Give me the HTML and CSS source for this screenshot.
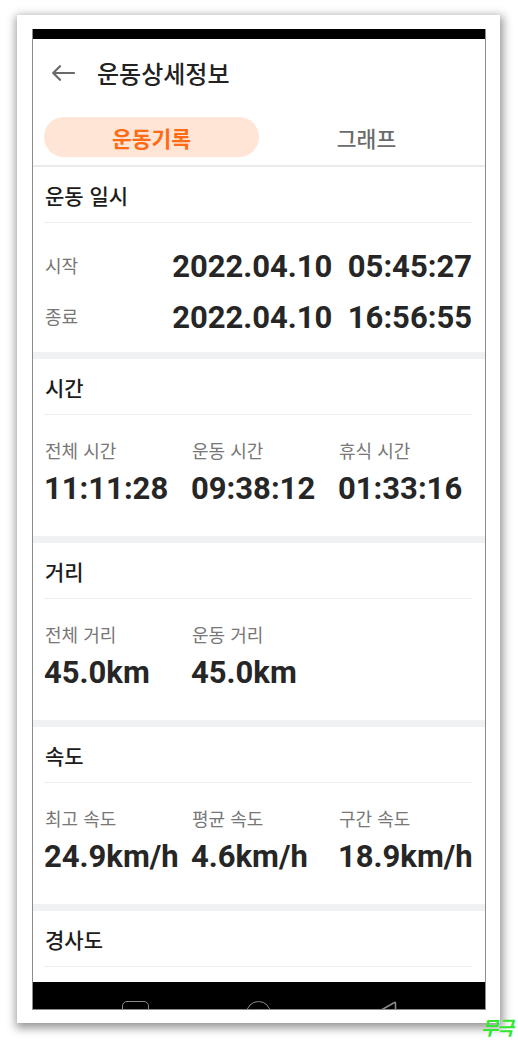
FILE: index.html
```html
<!DOCTYPE html>
<html lang="ko">
<head>
<meta charset="utf-8">
<title>운동상세정보</title>
<link rel="stylesheet" href="styles.css">
</head>
<body>
<div class="page">
  <div class="frame">
    <div class="screen">
      <div class="statusbar"></div>
      <div class="content">
        <header class="appbar">
          <svg class="back" width="24" height="16" viewBox="0 0 24 16" aria-hidden="true">
            <path d="M23 8H2.5M9 1.2L2.2 8L9 14.8" fill="none" stroke="#6a6a6a" stroke-width="2.2" stroke-linecap="round" stroke-linejoin="round"/>
          </svg>
          <h1 class="title">운동상세정보</h1>
        </header>
        <nav class="tabs">
          <div class="tab active"><span>운동기록</span></div>
          <div class="tab"><span>그래프</span></div>
        </nav>

        <section class="sec">
          <div class="sec-title">운동 일시</div>
          <div class="dt">
            <div class="dt-row"><span class="lbl">시작</span><span class="val">2022.04.10&nbsp;&nbsp;05:45:27</span></div>
            <div class="dt-row"><span class="lbl">종료</span><span class="val">2022.04.10&nbsp;&nbsp;16:56:55</span></div>
          </div>
        </section>

        <section class="sec">
          <div class="sec-title">시간</div>
          <div class="stats">
            <div class="stat"><span class="lbl">전체 시간</span><span class="val">11:11:28</span></div>
            <div class="stat"><span class="lbl">운동 시간</span><span class="val">09:38:12</span></div>
            <div class="stat"><span class="lbl">휴식 시간</span><span class="val">01:33:16</span></div>
          </div>
        </section>

        <section class="sec">
          <div class="sec-title">거리</div>
          <div class="stats">
            <div class="stat"><span class="lbl">전체 거리</span><span class="val">45.0km</span></div>
            <div class="stat"><span class="lbl">운동 거리</span><span class="val">45.0km</span></div>
          </div>
        </section>

        <section class="sec">
          <div class="sec-title">속도</div>
          <div class="stats">
            <div class="stat"><span class="lbl">최고 속도</span><span class="val">24.9km/h</span></div>
            <div class="stat"><span class="lbl">평균 속도</span><span class="val">4.6km/h</span></div>
            <div class="stat"><span class="lbl">구간 속도</span><span class="val">18.9km/h</span></div>
          </div>
        </section>

        <section class="sec">
          <div class="sec-title">경사도</div>
        </section>
      </div>
      <div class="navbar">
        <span class="nav-recent"></span>
        <span class="nav-home"></span>
        <svg class="nav-back" width="20" height="22" viewBox="0 0 20 22" aria-hidden="true">
          <path d="M17.5 2.5Q18.5 1.8 18.5 3.2V18.8Q18.5 20.2 17.5 19.5L2.5 11Z" fill="none" stroke="#8a8a8a" stroke-width="1.6" stroke-linejoin="round"/>
        </svg>
      </div>
    </div>
  </div>
  <div class="mark">무극</div>
</div>
</body>
</html>
```

FILE: styles.css
```css
* { box-sizing: border-box; }

html, body {
  margin: 0;
  padding: 0;
  background: #ffffff;
}

body {
  width: 518px;
  height: 1040px;
  overflow: hidden;
  font-family: "Noto Sans CJK KR", "Noto Sans", sans-serif;
  color: #222;
}

.page {
  position: relative;
  width: 518px;
  height: 1040px;
  padding: 15px 0 0 17px;
}

.frame {
  width: 483px;
  height: 1008px;
  background: #fff;
  padding: 14px 0 0 15px;
  box-shadow: 1px 3px 9px 2px rgba(0, 0, 0, 0.42);
}

.screen {
  width: 454px;
  height: 981px;
  border: 1px solid #8c8c8c;
  border-top: none;
  display: flex;
  flex-direction: column;
  overflow: hidden;
  background: #fff;
}

.statusbar {
  height: 10px;
  margin: 0 -1px;
  background: #000;
  flex: none;
}

.content {
  flex: 1;
  overflow: hidden;
}

.appbar {
  height: 68px;
  display: flex;
  align-items: center;
  padding-left: 18px;
}

.back { flex: none; }

.title {
  margin: 0 0 0 22px;
  font-size: 24px;
  font-weight: 500;
  color: #222;
  line-height: 1;
}

.tabs {
  display: grid;
  grid-template-columns: 1fr 1fr;
  padding: 10px 11px 8px;
  border-bottom: 2px solid #ebebeb;
}

.tab {
  height: 40px;
  border-radius: 20px;
  display: flex;
  align-items: center;
  justify-content: center;
  font-size: 21.5px;
  font-weight: 500;
  color: #6b6b6b;
}

.tab.active {
  background: #ffe5d5;
  color: #ff6a14;
  font-weight: 700;
}

.sec {
  border-top: 7px solid #f0f1f3;
  padding: 0 13px 0 11px;
}

.sec:first-of-type { border-top: none; }

.sec-title {
  height: 56px;
  display: flex;
  align-items: center;
  padding-left: 1px;
  font-size: 21px;
  font-weight: 500;
  color: #1c1c1c;
  border-bottom: 1px solid #eeeeee;
}

.lbl {
  font-size: 18px;
  color: #777;
  line-height: 24px;
  padding-left: 1px;
}

.val {
  font-family: Roboto, "Noto Sans CJK KR", sans-serif;
  font-weight: 700;
  font-size: 31px;
  color: #262626;
  line-height: 36px;
  white-space: nowrap;
}

.dt {
  padding: 18px 0 9px;
}

.dt-row {
  height: 51px;
  display: flex;
  align-items: center;
  justify-content: space-between;
}

.dt-row .lbl { margin-top: -4px; }

.stats {
  height: 121px;
  padding-top: 23px;
  display: grid;
  grid-template-columns: 147px 147px 147px;
}

.stat {
  display: flex;
  flex-direction: column;
  gap: 9px;
}

.navbar {
  flex: none;
  height: 27px;
  background: #000;
  display: flex;
  justify-content: center;
  align-items: flex-start;
  padding-top: 19px;
  overflow: hidden;
}

.nav-recent {
  width: 27px;
  height: 27px;
  border: 1.6px solid #8a8a8a;
  border-radius: 5px;
  margin-left: 1px;
}

.nav-home {
  width: 25px;
  height: 25px;
  border: 1.6px solid #8a8a8a;
  border-radius: 50%;
  margin-left: 97px;
}

.nav-back {
  margin-left: 106px;
  margin-top: -1px;
}

.mark {
  position: absolute;
  right: 4px;
  bottom: 2px;
  font-size: 19px;
  font-weight: 700;
  font-style: italic;
  color: #2fe82f;
  letter-spacing: -2px;
  line-height: 1.1;
  padding-right: 2px;
}
```
